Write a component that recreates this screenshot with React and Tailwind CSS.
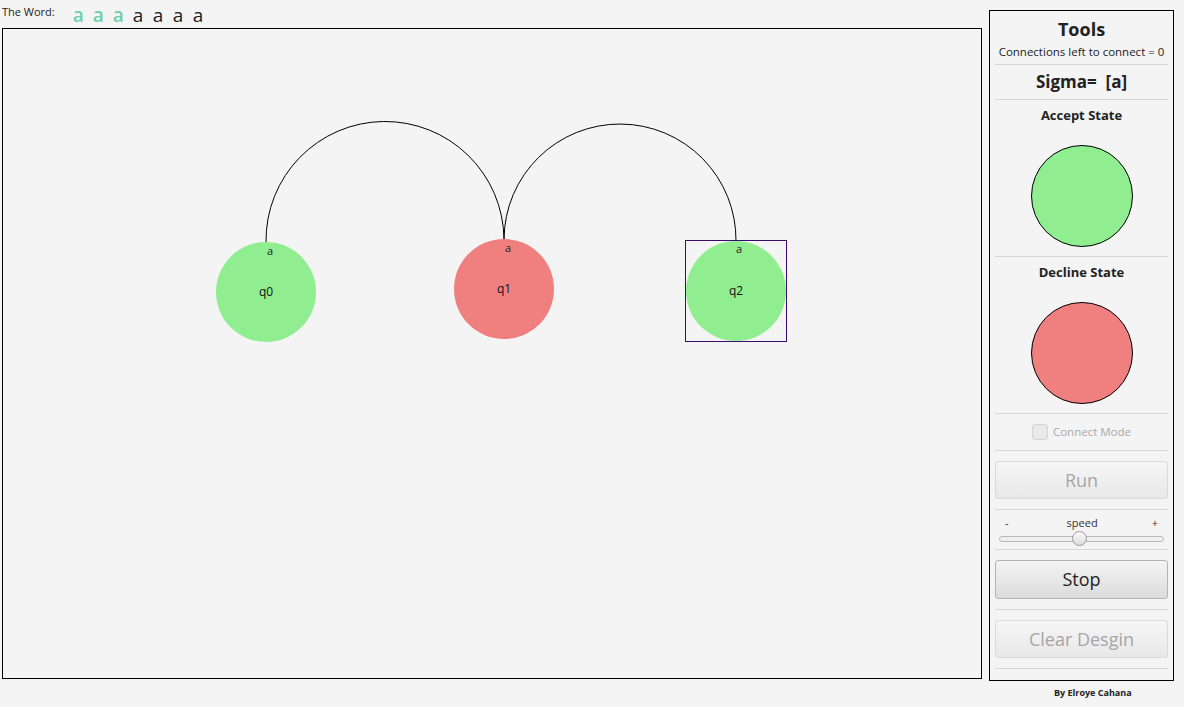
import React from 'react';

const word = [
  { ch: 'a', done: true },
  { ch: 'a', done: true },
  { ch: 'a', done: true },
  { ch: 'a', done: false },
  { ch: 'a', done: false },
  { ch: 'a', done: false },
  { ch: 'a', done: false },
];

const nodes = [
  { id: 'q0', x: 263, y: 263, fill: '#90ee90', lx: 267, ly: 226 },
  { id: 'q1', x: 501, y: 260, fill: '#f08080', lx: 505, ly: 223 },
  { id: 'q2', x: 733, y: 262, fill: '#90ee90', lx: 736, ly: 224, selected: true },
];

const Separator = () => <div className="mx-[5px] border-b border-[#d6d6d6]" />;

const Diagram = () => (
  <svg width="978" height="649" className="block">
    <path d="M 263 213 A 119 119 0 0 1 501 210" fill="none" stroke="#000" strokeWidth="1" />
    <path d="M 501 210 A 116 116 0 0 1 733 212" fill="none" stroke="#000" strokeWidth="1" />
    {nodes.map((n) => (
      <g key={n.id}>
        <circle cx={n.x} cy={n.y} r="50" fill={n.fill} />
        {n.selected && (
          <rect x={n.x - 50.5} y={n.y - 50.5} width="101" height="101" fill="none" stroke="#3b0a6e" strokeWidth="1" />
        )}
        <text x={n.lx} y={n.ly} fontSize="11" textAnchor="middle" fill="#222" fontFamily="Open Sans, sans-serif">a</text>
        <text x={n.x} y={n.y + 4} fontSize="12" textAnchor="middle" fill="#111" fontFamily="Open Sans, sans-serif">{n.id}</text>
      </g>
    ))}
  </svg>
);

const App = () => {
  return (
    <div className="w-[1184px] h-[707px] bg-[#f4f4f4] flex font-['Open_Sans',sans-serif] text-[#222] overflow-hidden">
      <div className="w-[983px] pl-[2px] flex flex-col">
        <div className="h-[28px] flex items-center">
          <span className="text-[11px] text-[#222] mr-[18px] -mt-[3px]">The Word:</span>
          <div className="flex">
            {word.map((w, i) => (
              <span
                key={i}
                className={`w-[20px] text-[19px] leading-none mt-[2px] ${w.done ? 'text-[#6fcfa6] font-semibold' : 'text-[#1e1e1e]'}`}
              >
                {w.ch}
              </span>
            ))}
          </div>
        </div>
        <div className="w-[980px] h-[651px] border border-black bg-[#f4f4f4]">
          <Diagram />
        </div>
      </div>

      <div className="ml-[6px] pt-[10px] flex flex-col">
        <div className="w-[185px] h-[671px] border border-black flex flex-col">
          <div className="h-[53px] flex flex-col items-center">
            <div className="text-[18px] font-bold leading-none mt-[9px] text-[#222]">Tools</div>
            <div className="text-[11.5px] leading-none mt-[8px] text-[#222]">Connections left to connect = 0</div>
          </div>
          <Separator />
          <div className="h-[34px] flex items-center justify-center text-[17px] font-bold text-[#222] whitespace-pre">Sigma=  [a]</div>
          <Separator />
          <div className="h-[156px] flex flex-col items-center">
            <div className="text-[13px] font-bold mt-[9px] leading-none text-[#222]">Accept State</div>
            <div className="w-[102px] h-[102px] rounded-full bg-[#90ee90] border border-black mt-[23px]" />
          </div>
          <Separator />
          <div className="h-[156px] flex flex-col items-center">
            <div className="text-[13px] font-bold mt-[9px] leading-none text-[#222]">Decline State</div>
            <div className="w-[102px] h-[102px] rounded-full bg-[#f08080] border border-black mt-[23px]" />
          </div>
          <Separator />
          <div className="h-[36px] flex items-center justify-center">
            <div className="w-[16px] h-[16px] rounded-[3px] bg-[#e9e9e9] border border-[#d4d4d4] mr-[5px]" />
            <span className="text-[11.5px] text-[#a8a8a8]">Connect Mode</span>
          </div>
          <Separator />
          <div className="h-[58px] flex items-center px-[5px]">
            <button className="w-full h-[38px] rounded-[3px] border border-[#dadada] bg-gradient-to-b from-[#f6f6f6] to-[#e8e8e8] text-[18px] text-[#a6a6a6]">
              Run
            </button>
          </div>
          <Separator />
          <div className="h-[39px] px-[9px] flex flex-col">
            <div className="flex justify-between items-center text-[11px] text-[#333] mt-[7px] leading-none px-[6px]">
              <span>-</span>
              <span className="ml-[4px]">speed</span>
              <span>+</span>
            </div>
            <div className="relative mt-[8px] h-[6px] rounded-full border border-[#b8b8b8] bg-[#f0f0f0]">
              <div className="absolute left-[72px] top-[-6px] w-[15px] h-[15px] rounded-full border border-[#9a9a9a] bg-gradient-to-b from-[#fafafa] to-[#dcdcdc]" />
            </div>
          </div>
          <Separator />
          <div className="h-[59px] flex items-center px-[5px]">
            <button className="w-full h-[39px] rounded-[3px] border border-[#b4b4b4] bg-gradient-to-b from-[#f4f4f4] to-[#dcdcdc] text-[18px] text-[#222]">
              Stop
            </button>
          </div>
          <Separator />
          <div className="h-[58px] flex items-center px-[5px]">
            <button className="w-full h-[38px] rounded-[3px] border border-[#dadada] bg-gradient-to-b from-[#f6f6f6] to-[#e8e8e8] text-[18px] text-[#a6a6a6]">
              Clear Desgin
            </button>
          </div>
          <Separator />
        </div>
        <div className="text-[9px] font-bold text-[#222] mt-[5px] ml-[65px]">By Elroye Cahana</div>
      </div>
    </div>
  );
};

export default App;
